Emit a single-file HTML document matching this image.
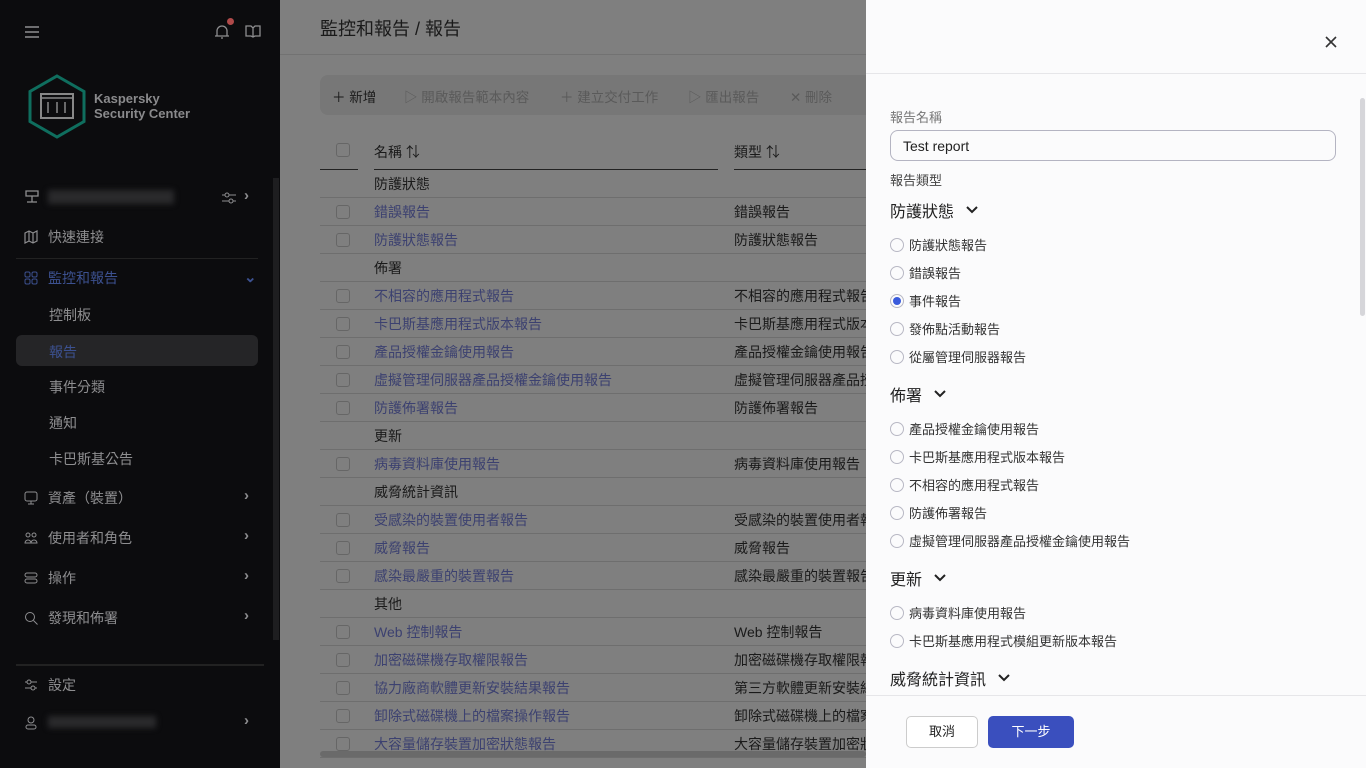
<!DOCTYPE html>
<html><head><meta charset="utf-8"><style>
*{box-sizing:border-box;margin:0;padding:0}
body{width:1366px;height:768px;overflow:hidden;position:relative;font-family:"Liberation Sans","Noto Sans CJK TC",sans-serif;background:#7f7f7f}
.sb{position:absolute;left:0;top:0;width:280px;height:768px;background:#0c0c0e;color:#8e8e90;font-size:14px}
.sb .it{position:absolute;left:24px;height:20px;display:flex;align-items:center}
.sb .it span{margin-left:10px}
.sb .arr{position:absolute;left:244px;font-size:15px;font-weight:bold;color:#8e8e90}
.sub{position:absolute;left:49px;font-size:14px;color:#8e8e90}
.main{position:absolute;left:280px;top:0;width:586px;height:768px;background:#7f7f7f;color:#111}
.row{position:absolute;left:40px;width:560px;height:28px;border-bottom:1px solid #6e6e6e;font-size:14px}
.row .n{position:absolute;left:54px;top:4px;color:#3c4170}
.row .g{position:absolute;left:54px;top:4px;color:#1a1a1a}
.row .t{position:absolute;left:414px;top:4px;color:#1a1a1a;white-space:nowrap}
.cb{position:absolute;left:16px;top:7px;width:14px;height:14px;border:1px solid #666;border-radius:3px}
.dr{position:absolute;left:866px;top:0;width:500px;height:768px;background:#fbfbfc;color:#222}
.rd{position:absolute;left:24px;font-size:13px;display:flex;align-items:center;color:#333}
.rd i{display:inline-block;width:14px;height:14px;border:1px solid #b8b8c4;border-radius:50%;margin-right:5px;position:relative}
.rd i.on::after{content:"";position:absolute;left:2px;top:2px;width:8px;height:8px;border-radius:50%;background:#3a5bdc}
.h{position:absolute;left:24px;font-size:16px;color:#222;display:flex;align-items:center}
.h svg{margin-left:12px}
</style></head><body>
<div class="sb">
 <svg style="position:absolute;left:25px;top:26px" width="14" height="12"><path d="M0 1h14M0 6h14M0 11h14" stroke="#8e8e90" stroke-width="1.5"/></svg>
 <svg style="position:absolute;left:213px;top:22px" width="18" height="18"><path d="M4 14V9a5 5 0 0110 0v5M2 14h14M8 16h2" stroke="#8e8e90" fill="none" stroke-width="1.3"/></svg>
 <div style="position:absolute;left:227px;top:18px;width:7px;height:7px;border-radius:50%;background:#b04a4a"></div>
 <svg style="position:absolute;left:245px;top:25px" width="16" height="13"><path d="M1 1h5l2 2 2-2h5v10h-5l-2 1-2-1H1zM8 3v9" stroke="#8e8e90" fill="none" stroke-width="1.3"/></svg>
 <svg style="position:absolute;left:27px;top:74px" width="60" height="65"><polygon points="30,2 57,17.5 57,47.5 30,63 3,47.5 3,17.5" fill="none" stroke="#0f6e5e" stroke-width="3"/><rect x="14" y="20" width="32" height="24" fill="none" stroke="#888" stroke-width="2"/><path d="M14 24h32M21 28v11M30 28v11M38 28v11" stroke="#888" stroke-width="1.5"/></svg>
 <div style="position:absolute;left:94px;top:91px;font-size:13px;font-weight:bold;color:#8a8a8c;line-height:15px">Kaspersky<br>Security Center</div>
 <div style="position:absolute;left:48px;top:190px;width:126px;height:14px;background:#2a2a2c;filter:blur(3px)"></div>
 <svg style="position:absolute;left:24px;top:190px" width="16" height="14"><path d="M2 1h12v5H2zM8 6v6M3 12h10" stroke="#8e8e90" fill="none" stroke-width="1.3"/></svg>
 <svg style="position:absolute;left:221px;top:190px" width="16" height="16"><path d="M1 5h14M1 11h14" stroke="#8e8e90"/><circle cx="6" cy="5" r="2" fill="#0c0c0e" stroke="#8e8e90"/><circle cx="10" cy="11" r="2" fill="#0c0c0e" stroke="#8e8e90"/></svg>
 <div class="arr" style="top:187px">›</div>
 <div class="it" style="top:227px"><svg width="14" height="14"><path d="M1 3l4-2 4 2 4-2v10l-4 2-4-2-4 2zM5 1v10M9 3v10" stroke="#8e8e90" fill="none" stroke-width="1.2"/></svg><span>快速連接</span></div>
 <div style="position:absolute;left:16px;top:258px;width:242px;height:1px;background:#222"></div>
 <div class="it" style="top:268px;color:#3c5190"><svg width="14" height="14"><rect x="1" y="1" width="5" height="5" rx="1.5" stroke="#3c5190" fill="none"/><rect x="8" y="1" width="5" height="5" rx="1.5" stroke="#3c5190" fill="none"/><rect x="1" y="8" width="5" height="5" rx="1.5" stroke="#3c5190" fill="none"/><rect x="8" y="8" width="5" height="5" rx="1.5" stroke="#3c5190" fill="none"/></svg><span>監控和報告</span></div><div class="arr" style="top:268px;color:#3c5190">⌄</div>
 <div class="sub" style="top:305px">控制板</div>
 <div style="position:absolute;left:16px;top:335px;width:242px;height:31px;background:#252527;border-radius:6px"></div>
 <div class="sub" style="top:342px;color:#3c5190">報告</div>
 <div class="sub" style="top:377px">事件分類</div>
 <div class="sub" style="top:413px">通知</div>
 <div class="sub" style="top:449px">卡巴斯基公告</div>
 <div class="it" style="top:488px"><svg width="14" height="14"><rect x="1" y="1" width="12" height="9" rx="2" stroke="#8e8e90" fill="none"/><path d="M7 10v3M4 13h6" stroke="#8e8e90"/></svg><span>資產（裝置）</span></div><div class="arr" style="top:487px">›</div>
 <div class="it" style="top:528px"><svg width="14" height="14"><circle cx="4" cy="4" r="2" stroke="#8e8e90" fill="none"/><circle cx="10" cy="4" r="2" stroke="#8e8e90" fill="none"/><path d="M1 12a3 3 0 016 0zM7 12a3 3 0 016 0z" stroke="#8e8e90" fill="none"/></svg><span>使用者和角色</span></div><div class="arr" style="top:527px">›</div>
 <div class="it" style="top:568px"><svg width="14" height="14"><rect x="1" y="2" width="12" height="4" rx="2" stroke="#8e8e90" fill="none"/><rect x="1" y="8" width="12" height="4" rx="2" stroke="#8e8e90" fill="none"/></svg><span>操作</span></div><div class="arr" style="top:567px">›</div>
 <div class="it" style="top:608px"><svg width="14" height="14"><circle cx="6" cy="6" r="4.5" stroke="#8e8e90" fill="none"/><path d="M9.5 9.5l4 4" stroke="#8e8e90"/></svg><span>發現和佈署</span></div><div class="arr" style="top:607px">›</div>
 <div style="position:absolute;left:273px;top:178px;width:6px;height:462px;background:#1e1e20"></div>
 <div style="position:absolute;left:16px;top:664px;width:248px;height:2px;background:#222"></div>
 <div class="it" style="top:675px"><svg width="14" height="14"><path d="M1 4h12M1 10h12" stroke="#8e8e90"/><circle cx="5" cy="4" r="2" fill="#0c0c0e" stroke="#8e8e90"/><circle cx="9" cy="10" r="2" fill="#0c0c0e" stroke="#8e8e90"/></svg><span>設定</span></div>
 <div style="position:absolute;left:48px;top:716px;width:108px;height:12px;background:#2a2a2c;filter:blur(3px)"></div>
 <div class="it" style="top:713px"><svg width="14" height="14"><circle cx="7" cy="4" r="3" stroke="#8e8e90" fill="none"/><rect x="2" y="9" width="10" height="4" rx="2" stroke="#8e8e90" fill="none"/></svg></div><div class="arr" style="top:712px">›</div>
</div>
<div class="main">
 <div style="position:absolute;left:40px;top:15px;font-size:18px;color:#1a1a1a">監控和報告 / 報告</div>
 <div style="position:absolute;left:0;top:54px;width:586px;height:1px;background:#727272"></div>
 <div style="position:absolute;left:40px;top:75px;width:560px;height:40px;background:#777;border-radius:8px;font-size:13.5px;color:#5a5a5a;white-space:nowrap">
  <span style="position:absolute;left:12px;top:11px;color:#1a1a1a">＋ 新增</span>
  <span style="position:absolute;left:84px;top:11px">▷ 開啟報告範本內容</span>
  <span style="position:absolute;left:240px;top:11px">＋ 建立交付工作</span>
  <span style="position:absolute;left:368px;top:11px">▷ 匯出報告</span>
  <span style="position:absolute;left:470px;top:11px">✕ 刪除</span>
 </div>
 <div style="position:absolute;left:56px;top:143px;width:14px;height:14px;border:1px solid #666;border-radius:3px"></div>
 <div style="position:absolute;left:94px;top:142px;font-size:14px;color:#1a1a1a">名稱 ⇅</div>
 <div style="position:absolute;left:454px;top:142px;font-size:14px;color:#1a1a1a">類型 ⇅</div>
 <div style="position:absolute;left:40px;top:169px;width:38px;height:1px;background:#222"></div>
 <div style="position:absolute;left:94px;top:169px;width:344px;height:1px;background:#222"></div>
 <div style="position:absolute;left:454px;top:169px;width:132px;height:1px;background:#222"></div>
 <div class="row" style="top:170px"><span class="g">防護狀態</span></div>
 <div class="row" style="top:198px"><i class="cb"></i><span class="n">錯誤報告</span><span class="t">錯誤報告</span></div>
 <div class="row" style="top:226px"><i class="cb"></i><span class="n">防護狀態報告</span><span class="t">防護狀態報告</span></div>
 <div class="row" style="top:254px"><span class="g">佈署</span></div>
 <div class="row" style="top:282px"><i class="cb"></i><span class="n">不相容的應用程式報告</span><span class="t">不相容的應用程式報告</span></div>
 <div class="row" style="top:310px"><i class="cb"></i><span class="n">卡巴斯基應用程式版本報告</span><span class="t">卡巴斯基應用程式版本報告</span></div>
 <div class="row" style="top:338px"><i class="cb"></i><span class="n">產品授權金鑰使用報告</span><span class="t">產品授權金鑰使用報告</span></div>
 <div class="row" style="top:366px"><i class="cb"></i><span class="n">虛擬管理伺服器產品授權金鑰使用報告</span><span class="t">虛擬管理伺服器產品授權</span></div>
 <div class="row" style="top:394px"><i class="cb"></i><span class="n">防護佈署報告</span><span class="t">防護佈署報告</span></div>
 <div class="row" style="top:422px"><span class="g">更新</span></div>
 <div class="row" style="top:450px"><i class="cb"></i><span class="n">病毒資料庫使用報告</span><span class="t">病毒資料庫使用報告</span></div>
 <div class="row" style="top:478px"><span class="g">威脅統計資訊</span></div>
 <div class="row" style="top:506px"><i class="cb"></i><span class="n">受感染的裝置使用者報告</span><span class="t">受感染的裝置使用者報告</span></div>
 <div class="row" style="top:534px"><i class="cb"></i><span class="n">威脅報告</span><span class="t">威脅報告</span></div>
 <div class="row" style="top:562px"><i class="cb"></i><span class="n">感染最嚴重的裝置報告</span><span class="t">感染最嚴重的裝置報告</span></div>
 <div class="row" style="top:590px"><span class="g">其他</span></div>
 <div class="row" style="top:618px"><i class="cb"></i><span class="n">Web 控制報告</span><span class="t">Web 控制報告</span></div>
 <div class="row" style="top:646px"><i class="cb"></i><span class="n">加密磁碟機存取權限報告</span><span class="t">加密磁碟機存取權限報告</span></div>
 <div class="row" style="top:674px"><i class="cb"></i><span class="n">協力廠商軟體更新安裝結果報告</span><span class="t">第三方軟體更新安裝結果</span></div>
 <div class="row" style="top:702px"><i class="cb"></i><span class="n">卸除式磁碟機上的檔案操作報告</span><span class="t">卸除式磁碟機上的檔案操</span></div>
 <div class="row" style="top:730px"><i class="cb"></i><span class="n">大容量儲存裝置加密狀態報告</span><span class="t">大容量儲存裝置加密狀</span></div>
 <div style="position:absolute;left:40px;top:751px;width:546px;height:6px;background:#6a6a6a;border-radius:3px"></div>
</div>
<div class="dr">
 <svg style="position:absolute;left:459px;top:36px" width="12" height="12"><path d="M1 1l10 10M11 1L1 11" stroke="#333" stroke-width="1.6"/></svg>
 <div style="position:absolute;left:0;top:73px;width:500px;height:1px;background:#e6e6e9"></div>
 <div style="position:absolute;left:24px;top:107px;font-size:13px;color:#777">報告名稱</div>
 <div style="position:absolute;left:24px;top:130px;width:446px;height:31px;border:1px solid #b4b4c2;border-radius:8px;font-size:14px;padding:7px 12px;color:#222">Test report</div>
 <div style="position:absolute;left:24px;top:170px;font-size:13px;color:#444">報告類型</div>
 <div class="h" style="top:198px">防護狀態<svg width="12" height="8"><path d="M1 1l5 5 5-5" stroke="#222" stroke-width="2" fill="none"/></svg></div>
 <div class="rd" style="top:235px"><i></i>防護狀態報告</div>
 <div class="rd" style="top:263px"><i></i>錯誤報告</div>
 <div class="rd" style="top:291px"><i class="on"></i>事件報告</div>
 <div class="rd" style="top:319px"><i></i>發佈點活動報告</div>
 <div class="rd" style="top:347px"><i></i>從屬管理伺服器報告</div>
 <div class="h" style="top:382px">佈署<svg width="12" height="8"><path d="M1 1l5 5 5-5" stroke="#222" stroke-width="2" fill="none"/></svg></div>
 <div class="rd" style="top:419px"><i></i>產品授權金鑰使用報告</div>
 <div class="rd" style="top:447px"><i></i>卡巴斯基應用程式版本報告</div>
 <div class="rd" style="top:475px"><i></i>不相容的應用程式報告</div>
 <div class="rd" style="top:503px"><i></i>防護佈署報告</div>
 <div class="rd" style="top:531px"><i></i>虛擬管理伺服器產品授權金鑰使用報告</div>
 <div class="h" style="top:566px">更新<svg width="12" height="8"><path d="M1 1l5 5 5-5" stroke="#222" stroke-width="2" fill="none"/></svg></div>
 <div class="rd" style="top:603px"><i></i>病毒資料庫使用報告</div>
 <div class="rd" style="top:631px"><i></i>卡巴斯基應用程式模組更新版本報告</div>
 <div class="h" style="top:666px">威脅統計資訊<svg width="12" height="8"><path d="M1 1l5 5 5-5" stroke="#222" stroke-width="2" fill="none"/></svg></div>
 <div style="position:absolute;left:494px;top:98px;width:5px;height:218px;background:#d6d6da;border-radius:3px"></div>
 <div style="position:absolute;left:0;top:695px;width:500px;height:73px;background:#fbfbfc;border-top:1px solid #e6e6e9"></div>
 <div style="position:absolute;left:40px;top:716px;width:72px;height:32px;border:1px solid #ccc;border-radius:5px;background:#fff;font-size:13px;text-align:center;line-height:30px;color:#222">取消</div>
 <div style="position:absolute;left:122px;top:716px;width:86px;height:32px;border-radius:5px;background:#3a4fbe;font-size:13px;text-align:center;line-height:32px;color:#fff">下一步</div>
</div>
</body></html>
